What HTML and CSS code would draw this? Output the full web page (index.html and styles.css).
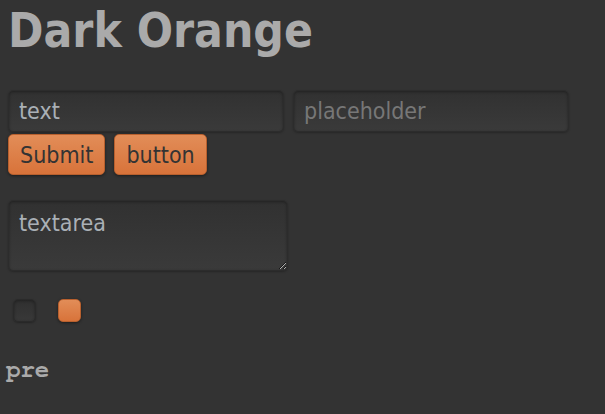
FILE: index.html
```html
<!DOCTYPE html>
<html>
<head>
<meta charset="utf-8">
<link rel="stylesheet" href="styles.css">
</head>
<body>
<div class="page">
  <h1 class="title">Dark Orange</h1>
  <div class="field-row">
    <input class="field" type="text" value="text">
    <input class="field" type="text" placeholder="placeholder">
  </div>
  <div class="button-row">
    <button class="btn btn-submit" type="button">Submit</button>
    <button class="btn btn-plain" type="button">button</button>
  </div>
  <textarea class="area">textarea</textarea>
  <div class="check-row">
    <input class="check" type="checkbox">
    <input class="check" type="checkbox" checked>
  </div>
  <pre class="code">pre</pre>
</div>
</body>
</html>
```
FILE: styles.css
```css
html, body {
  margin: 0;
  background: #333333;
}

.page {
  display: flex;
  flex-direction: column;
  align-items: flex-start;
  padding: 3px 8px 0;
  font-family: "DejaVu Sans Condensed", "DejaVu Sans", sans-serif;
  color: #aaaaaa;
}

.title {
  margin: 0;
  font-size: 47.5px;
  line-height: 56px;
  font-weight: bold;
  color: #aaaaaa;
}

.field-row {
  display: flex;
  gap: 9px;
  margin-top: 31px;
}

.field, .area {
  box-sizing: border-box;
  font-family: "DejaVu Sans Condensed", "DejaVu Sans", sans-serif;
  font-size: 23px;
  color: #aab0b6;
  background: linear-gradient(#313131, #3a3a3a);
  border: 1px solid #2c2c2c;
  border-radius: 5px;
  box-shadow: inset 0 1px 3px rgba(0, 0, 0, 0.35), 0 1px 2px rgba(0, 0, 0, 0.25);
  outline: none;
  margin: 0;
}

.field {
  width: 276px;
  height: 42px;
  padding: 0 10px;
}

.field::placeholder {
  color: #777777;
}

.button-row {
  display: flex;
  gap: 9px;
  margin-top: 2px;
}

.btn {
  box-sizing: border-box;
  height: 41px;
  padding: 0 11px;
  margin: 0;
  font-family: "DejaVu Sans Condensed", "DejaVu Sans", sans-serif;
  font-size: 23px;
  color: #333333;
  background: linear-gradient(#e28d58, #d8733a);
  border: 1px solid #b8602e;
  border-radius: 5px;
  box-shadow: 0 1px 3px rgba(0, 0, 0, 0.45);
}

.area {
  width: 280px;
  height: 71px;
  padding: 9px 10px;
  margin-top: 25px;
  resize: both;
}

.check-row {
  display: flex;
  gap: 22px;
  margin-top: 28px;
  padding-left: 5px;
}

.check {
  appearance: none;
  -webkit-appearance: none;
  box-sizing: border-box;
  width: 23px;
  height: 23px;
  margin: 0;
  border-radius: 5px;
  border: 1px solid #2a2a2a;
  background: linear-gradient(#303030, #383838);
  box-shadow: inset 0 1px 3px rgba(0, 0, 0, 0.35), 0 1px 2px rgba(0, 0, 0, 0.3);
}

.check:checked {
  border-color: #b8602e;
  background: linear-gradient(#e28d58, #d8733a);
  box-shadow: 0 1px 3px rgba(0, 0, 0, 0.45);
}

.code {
  margin: 36px 0 0 -2px;
  font-family: "Nimbus Mono PS", "Nimbus Mono L", "FreeMono", "Courier 10 Pitch", "Liberation Mono", monospace;
  font-weight: bold;
  font-size: 24px;
  color: #aaaaaa;
}
```
